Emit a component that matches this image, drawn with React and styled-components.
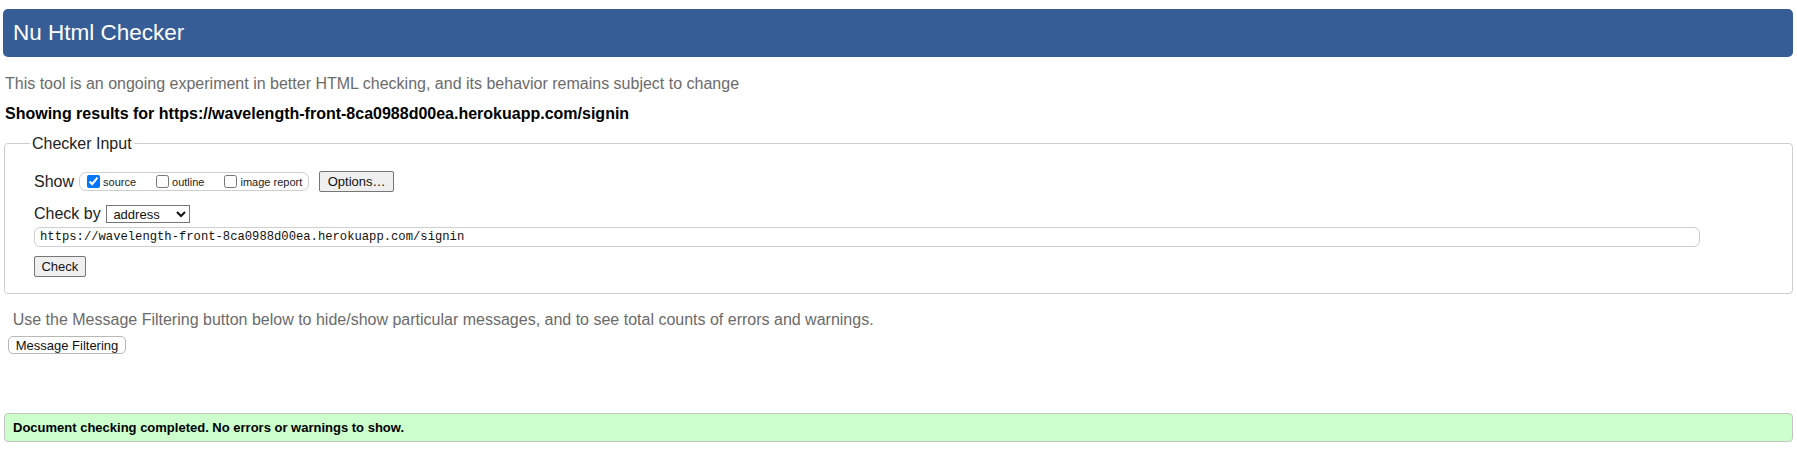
import React from "react";
import styled, { createGlobalStyle } from "styled-components";

const GlobalStyle = createGlobalStyle`
  html, body {
    margin: 0;
    padding: 0;
    background: #fff;
  }
  body {
    font-family: "Liberation Sans", Arial, sans-serif;
    font-size: 16px;
    color: #000;
  }
`;

const Page = styled.div`
  display: flex;
  flex-direction: column;
  padding: 9px 4px 0 3px;
`;

const Header = styled.h1`
  margin: 0;
  height: 48px;
  display: flex;
  align-items: center;
  padding: 0 10px;
  background: #365d95;
  color: #fff;
  border-radius: 5px;
  font-size: 22.5px;
  font-weight: normal;
`;

const Note = styled.p`
  margin: ${(p) => p.$top || 0}px 0 0 ${(p) => p.$indent || 2}px;
  font-size: 16px;
  line-height: 18px;
  color: #6b6b6b;
`;

const Results = styled.p`
  margin: 12px 0 0 2px;
  font-size: 16px;
  line-height: 18px;
  font-weight: bold;
`;

const Fieldset = styled.fieldset`
  margin: 12px 0 0 1px;
  padding: 18.5px 29px 16.3px 29px;
  border: 1px solid #cfcfcf;
  border-radius: 4px;
  display: flex;
  flex-direction: column;
  align-items: flex-start;
  min-width: 0;

  legend {
    margin-left: -4px;
    padding: 0 2px;
    font-size: 16px;
    line-height: 18px;
    color: #222;
  }
`;

const Row = styled.div`
  display: flex;
  align-items: center;
  margin-top: ${(p) => p.$top || 0}px;
  height: ${(p) => p.$height}px;
`;

const RowLabel = styled.span`
  font-size: 16px;
  line-height: 18px;
  color: #222;
  margin-right: ${(p) => p.$gap}px;
`;

const CheckGroup = styled.span`
  display: inline-flex;
  align-items: center;
  box-sizing: border-box;
  height: 19px;
  padding: 0 6px 0 3px;
  border: 1px solid #cfcfcf;
  border-radius: 7px;
  margin-right: 10px;
`;

const CheckItem = styled.label`
  display: inline-flex;
  align-items: center;
  font-size: 11px;
  line-height: 13px;
  color: #222;
  margin-right: ${(p) => (p.$last ? 0 : 16)}px;

  input {
    width: 13px;
    height: 13px;
    margin: 0 3px 0 4px;
  }

  span {
    padding-top: 2px;
  }
`;

const Button = styled.button`
  font-family: "Liberation Sans", Arial, sans-serif;
  font-size: 13px;
  color: #111;
  box-sizing: border-box;
  height: ${(p) => p.$height || 21}px;
  padding: 0 ${(p) => p.$pad || 6}px;
  margin-top: ${(p) => p.$top || 0}px;
  background: ${(p) => (p.$light ? "#fff" : "#efefef")};
  border: 1px solid ${(p) => (p.$light ? "#b8b8b8" : "#767676")};
  border-radius: ${(p) => (p.$light ? 5 : 2)}px;
  line-height: 1;
`;

const Select = styled.select`
  font-family: "Liberation Sans", Arial, sans-serif;
  font-size: 13px;
  width: 84px;
  height: 18px;
  box-sizing: border-box;
  padding: 0 0 0 2px;
  border: 1px solid #767676;
  border-radius: 0;
  background: #fff;
  color: #111;
`;

const UrlInput = styled.input`
  margin-top: 3.7px;
  box-sizing: border-box;
  width: 1666px;
  height: 20.6px;
  padding: 0 5px;
  border: 1px solid #cfcfcf;
  border-radius: 6px;
  font-family: "Liberation Mono", "DejaVu Sans Mono", monospace;
  font-size: 12.2px;
  color: #111;
`;

const FilterButton = styled(Button)`
  align-self: flex-start;
  margin-left: 5px;
`;

const Success = styled.div`
  margin: 59px 0 0 1px;
  height: 29px;
  box-sizing: border-box;
  display: flex;
  align-items: center;
  padding: 0 8px;
  background: #ccffcc;
  border: 1px solid #c4c4c4;
  border-radius: 4px;
  font-size: 13px;
  font-weight: bold;
`;

const url = "https://wavelength-front-8ca0988d00ea.herokuapp.com/signin";

function App() {
  return (
    <>
      <GlobalStyle />
      <Page>
        <Header>Nu Html Checker</Header>
        <Note $top={17.5}>
          This tool is an ongoing experiment in better HTML checking, and its behavior remains subject to change
        </Note>
        <Results>Showing results for {url}</Results>
        <Fieldset>
          <legend>Checker Input</legend>
          <Row $height={21}>
            <RowLabel $gap={5}>Show</RowLabel>
            <CheckGroup>
              <CheckItem>
                <input type="checkbox" defaultChecked />
                <span>source</span>
              </CheckItem>
              <CheckItem>
                <input type="checkbox" />
                <span>outline</span>
              </CheckItem>
              <CheckItem $last>
                <input type="checkbox" />
                <span>image report</span>
              </CheckItem>
            </CheckGroup>
            <Button $pad={7.5}>Options…</Button>
          </Row>
          <Row $top={13} $height={18}>
            <RowLabel $gap={5.7}>Check by</RowLabel>
            <Select defaultValue="address">
              <option value="address">address</option>
              <option value="file">file upload</option>
              <option value="text">text input</option>
            </Select>
          </Row>
          <UrlInput type="url" defaultValue={url} />
          <Button $top={8.7} $height={20.7} $pad={6.4}>
            Check
          </Button>
        </Fieldset>
        <Note $top={17} $indent={9.7}>
          Use the Message Filtering button below to hide/show particular messages, and to see total counts of errors and warnings.
        </Note>
        <FilterButton $light $top={7.5} $height={18} $pad={6.7}>
          Message Filtering
        </FilterButton>
        <Success>Document checking completed. No errors or warnings to show.</Success>
      </Page>
    </>
  );
}

export default App;
